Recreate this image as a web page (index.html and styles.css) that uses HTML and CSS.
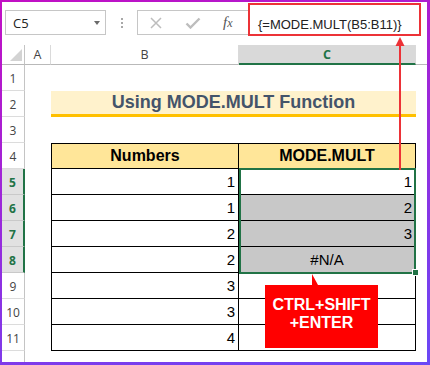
FILE: index.html
```html
<!DOCTYPE html>
<html>
<head>
<meta charset="utf-8">
<title>Using MODE.MULT Function</title>
<link rel="stylesheet" href="styles.css">
</head>
<body>
<div class="window">

  <div class="formula-bar">
    <div class="name-box"><span>C5</span><span class="caret"></span></div>
    <div class="grip"><i></i><i></i><i></i></div>
    <div class="fx-box">
      <svg class="cancel" width="12" height="12" viewBox="0 0 12 12"><path d="M1 1L11 11M11 1L1 11"/></svg>
      <svg class="enter" width="16" height="12" viewBox="0 0 16 12"><path d="M1.5 6.5L5.5 10.5L14.5 1.5"/></svg>
      <span class="fx"><i>f</i><i class="sub">x</i></span>
    </div>
    <div class="formula">{=MODE.MULT(B5:B11)}</div>
  </div>

  <div class="sheet">
    <div class="row col-head">
      <div class="corner"></div>
      <div class="ch">A</div>
      <div class="ch">B</div>
      <div class="ch active">C</div>
      <div class="ch rest"></div>
    </div>
    <div class="row"><div class="rh">1</div></div>
    <div class="row">
      <div class="rh">2</div><div></div>
      <div class="title">Using MODE.MULT Function</div>
    </div>
    <div class="row"><div class="rh">3</div></div>
    <div class="row">
      <div class="rh">4</div><div></div>
      <div class="cell head first">Numbers</div>
      <div class="cell head">MODE.MULT</div>
    </div>
    <div class="row">
      <div class="rh sel">5</div><div></div>
      <div class="cell first">1</div>
      <div class="cell">1</div>
    </div>
    <div class="row">
      <div class="rh sel">6</div><div></div>
      <div class="cell first">1</div>
      <div class="cell shade">2</div>
    </div>
    <div class="row">
      <div class="rh sel">7</div><div></div>
      <div class="cell first">2</div>
      <div class="cell shade">3</div>
    </div>
    <div class="row">
      <div class="rh sel">8</div><div></div>
      <div class="cell first">2</div>
      <div class="cell shade center">#N/A</div>
    </div>
    <div class="row">
      <div class="rh">9</div><div></div>
      <div class="cell first">3</div>
      <div class="cell"></div>
    </div>
    <div class="row">
      <div class="rh">10</div><div></div>
      <div class="cell first">3</div>
      <div class="cell"></div>
    </div>
    <div class="row">
      <div class="rh">11</div><div></div>
      <div class="cell first">4</div>
      <div class="cell"></div>
    </div>
    <div class="row tail"><div class="rh"></div></div>
  </div>

  <!-- annotations drawn over the sheet -->
  <div class="selection"></div>
  <div class="fill-handle"></div>
  <svg class="arrow" width="12" height="134" viewBox="0 0 12 134">
    <path class="shaft" d="M6 8V134"/>
    <path class="head" d="M6 1L10.5 10H1.5Z"/>
  </svg>
  <div class="callout">CTRL+SHIFT<br>+ENTER</div>

</div>
</body>
</html>
```
FILE: styles.css
```css
body {
  margin: 0;
  background: #fff;
}
.window {
  position: relative;
  box-sizing: border-box;
  width: 430px;
  height: 365px;
  border-style: solid;
  border-width: 2px 3px 3px 2px;
  border-image: linear-gradient(165deg, #c20fc4, #6a48f6) 1;
  font-family: "Liberation Sans", Arial, sans-serif;
  overflow: hidden;
}

/* formula bar */
.formula-bar {
  display: flex;
  align-items: flex-start;
  height: 43px;
  padding-left: 3px;
}
.name-box {
  display: flex;
  align-items: center;
  justify-content: space-between;
  box-sizing: border-box;
  width: 101px;
  height: 25px;
  margin-top: 8px;
  padding: 0 5px 0 7px;
  border: 1px solid #c6c6c6;
  font: 13px "Open Sans", sans-serif;
  color: #222;
}
.caret {
  border-left: 3.5px solid transparent;
  border-right: 3.5px solid transparent;
  border-top: 4px solid #6a6a6a;
}
.grip {
  display: flex;
  flex-direction: column;
  gap: 2px;
  margin: 16px 0 0 15px;
}
.grip i {
  width: 2px;
  height: 2px;
  background: #a8a8a8;
}
.fx-box {
  display: flex;
  align-items: center;
  box-sizing: border-box;
  width: 111px;
  height: 25px;
  margin: 8px 0 0 14px;
  padding-left: 12px;
  border: 1px solid #c6c6c6;
  border-right: none;
}
.fx-box svg path {
  fill: none;
  stroke: #bdbdbd;
}
.cancel path {
  stroke-width: 1.5;
}
.enter {
  margin-left: 23px;
}
.enter path {
  stroke-width: 2.4;
}
.fx {
  margin-left: 22px;
  font-family: "Liberation Serif", serif;
  font-size: 15px;
  color: #555;
}
.fx .sub {
  font-size: 12px;
}
.formula {
  box-sizing: border-box;
  width: 173px;
  height: 33px;
  margin-top: 1px;
  padding: 12px 0 0 8px;
  border: 2px solid #ec3237;
  font-size: 13px;
  line-height: 15px;
  color: #222;
}

/* sheet grid */
.row {
  display: grid;
  grid-template-columns: 23px 26px 188px 177px 1fr;
  height: 26px;
}
.row > div {
  box-sizing: border-box;
}
.col-head {
  height: 20px;
}
.tail {
  height: 11px;
}
.corner {
  display: flex;
  align-items: flex-end;
  justify-content: flex-end;
  padding: 0 2px 3px 0;
  border-right: 1px solid #c4c4c4;
  border-bottom: 1px solid #b9b9b9;
}
.corner::after {
  content: "";
  width: 12px;
  height: 12px;
  background: #d3d3d3;
  clip-path: polygon(100% 0, 100% 100%, 0 100%);
}
.ch {
  display: flex;
  align-items: center;
  justify-content: center;
  border-right: 1px solid #dadada;
  border-bottom: 1px solid #b9b9b9;
  font: 12.5px "Open Sans", sans-serif;
  color: #444;
}
.ch.active {
  background: #d9d9d9;
  border-bottom: 2px solid #217346;
  color: #217346;
  font-weight: bold;
}
.ch.rest {
  border-right: none;
}
.rh {
  padding-top: 5px;
  border-right: 1px solid #c4c4c4;
  border-bottom: 1px solid #dcdcdc;
  text-align: center;
  font: 12px "Open Sans", sans-serif;
  color: #444;
}
.rh.sel {
  background: #e1e1e1;
  border-right: 2px solid #217346;
  border-bottom-color: #c9c9c9;
  color: #217346;
  font-weight: bold;
}
.tail .rh {
  border-bottom: none;
}

/* worksheet content */
.title {
  grid-column: span 2;
  display: flex;
  align-items: center;
  justify-content: center;
  background: #fff2cc;
  border-bottom: 3px solid #ffc000;
  font-size: 18px;
  font-weight: bold;
  color: #44546a;
}
.cell {
  display: flex;
  align-items: center;
  justify-content: flex-end;
  padding-right: 3px;
  border-right: 1px solid #000;
  border-bottom: 1px solid #000;
  font-size: 15px;
  color: #000;
}
.cell.first {
  border-left: 1px solid #000;
}
.cell.head {
  justify-content: center;
  padding-right: 0;
  background: #ffe699;
  border-top: 1px solid #000;
  font-size: 16px;
  font-weight: bold;
}
.cell.shade {
  background: #c8c8c8;
}
.cell.center {
  justify-content: center;
  padding-right: 0;
}

/* overlays */
.selection {
  position: absolute;
  left: 237px;
  top: 166px;
  box-sizing: border-box;
  width: 177px;
  height: 106px;
  border: 2px solid #217346;
}
.fill-handle {
  position: absolute;
  left: 411px;
  top: 268px;
  width: 5px;
  height: 5px;
  background: #217346;
  outline: 1px solid #fff;
}
.arrow {
  position: absolute;
  left: 392px;
  top: 34px;
}
.arrow .shaft {
  stroke: #ec3237;
  stroke-width: 2;
}
.arrow .head {
  fill: #ec3237;
}
.callout {
  position: absolute;
  left: 263px;
  top: 283px;
  display: flex;
  align-items: center;
  justify-content: center;
  box-sizing: border-box;
  width: 113px;
  height: 63px;
  padding-bottom: 5px;
  background: #ff0000;
  color: #fff;
  font-size: 16px;
  font-weight: bold;
  line-height: 18px;
  text-align: center;
}
.callout::before {
  content: "";
  position: absolute;
  left: 47px;
  top: -11px;
  width: 6px;
  height: 11px;
  background: #ff0000;
  clip-path: polygon(0 0, 100% 100%, 0 100%);
}
```
